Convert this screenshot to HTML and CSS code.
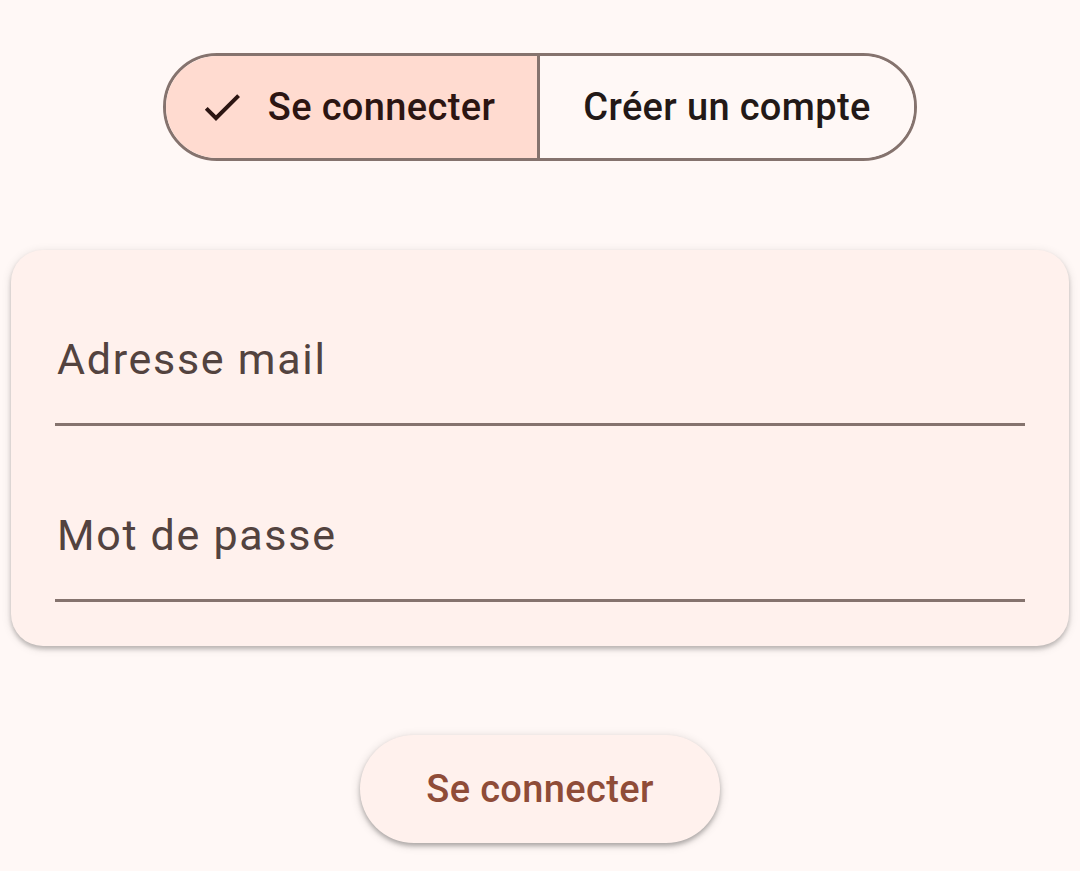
FILE: index.html
```html
<!DOCTYPE html>
<html lang="fr">
<head>
<meta charset="utf-8">
<title>Connexion</title>
<link rel="stylesheet" href="styles.css">
</head>
<body>
<main class="screen">
  <div class="segmented">
    <div class="segment selected">
      <svg class="check" viewBox="0 0 24 24" width="48" height="48" aria-hidden="true">
        <path d="M9 16.17L4.83 12l-1.42 1.41L9 19 21 7l-1.41-1.41z" fill="currentColor"/>
      </svg>
      <span class="seg-label">Se connecter</span>
    </div>
    <div class="segment">
      <span class="seg-label">Créer un compte</span>
    </div>
  </div>

  <section class="card">
    <div class="field"><span class="field-label">Adresse mail</span></div>
    <div class="field"><span class="field-label">Mot de passe</span></div>
  </section>

  <button class="elevated-btn">Se connecter</button>
</main>
</body>
</html>
```

FILE: styles.css
```css
html, body {
  margin: 0;
  padding: 0;
  background: #fff8f6;
}

body {
  font-family: Roboto, "Noto Sans", "Liberation Sans", sans-serif;
  width: 1080px;
  height: 871px;
  overflow: hidden;
}

.screen {
  display: flex;
  flex-direction: column;
  align-items: center;
  padding-top: 53px;
}

.segmented {
  display: grid;
  grid-template-columns: 1fr 1fr;
  width: 754px;
  height: 108px;
  box-sizing: border-box;
  border: 3px solid #85736e;
  border-radius: 54px;
  overflow: hidden;
}

.segment {
  box-sizing: border-box;
  display: flex;
  align-items: center;
  justify-content: center;
  gap: 22px;
  color: #231917;
  background: #fff8f6;
}

.segment.selected {
  background: #ffdbd0;
  color: #2c1512;
  border-right: 3px solid #85736e;
  padding-right: 10px;
}

.check {
  display: block;
}

.seg-label {
  font-size: 38px;
  font-weight: 500;
  letter-spacing: 0.35px;
  line-height: 48px;
}

.card {
  margin-top: 89px;
  width: 1058px;
  box-sizing: border-box;
  padding: 0 44px 44px;
  background: #fff1ed;
  border-radius: 32px;
  box-shadow: 0 3px 4px rgba(0, 0, 0, 0.22), 0 2px 8px 2px rgba(0, 0, 0, 0.08);
}

.field {
  padding: 84px 0 39px 2px;
  border-bottom: 3px solid #85736e;
  font-size: 43px;
  line-height: 50px;
}

.field-label {
  font-size: 43px;
  letter-spacing: 1.7px;
  color: #53433f;
}

.elevated-btn {
  margin-top: 89px;
  width: 360px;
  height: 108px;
  border: none;
  border-radius: 54px;
  background: #fff1ed;
  color: #8f4c38;
  font-family: inherit;
  font-size: 38px;
  font-weight: 500;
  letter-spacing: 0.35px;
  box-shadow: 0 3px 4px rgba(0, 0, 0, 0.25), 0 2px 8px 2px rgba(0, 0, 0, 0.1);
  cursor: pointer;
}
```
